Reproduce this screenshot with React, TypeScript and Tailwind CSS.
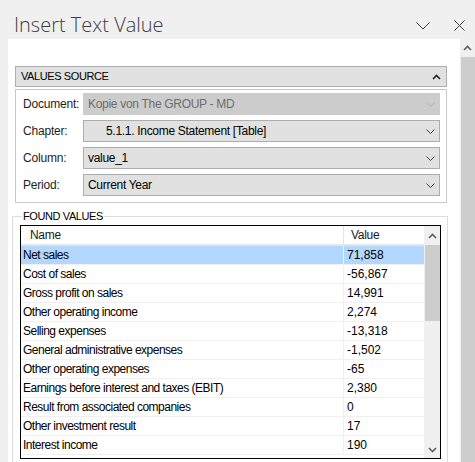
import React from "react";

const rows: [string, string][] = [
  ["Net sales", "71,858"],
  ["Cost of sales", "-56,867"],
  ["Gross profit on sales", "14,991"],
  ["Other operating income", "2,274"],
  ["Selling expenses", "-13,318"],
  ["General administrative expenses", "-1,502"],
  ["Other operating expenses", "-65"],
  ["Earnings before interest and taxes (EBIT)", "2,380"],
  ["Result from associated companies", "0"],
  ["Other investment result", "17"],
  ["Interest income", "190"],
];

function SmallChevron({ up = false, color = "#606060" }: { up?: boolean; color?: string }) {
  return (
    <svg width="9" height="6" viewBox="0 0 9 6" className="block">
      <path
        d={up ? "M1 5 L4.5 1.5 L8 5" : "M1 1 L4.5 4.5 L8 1"}
        fill="none"
        stroke={color}
        strokeWidth="1.6"
      />
    </svg>
  );
}

function Select({
  label,
  value,
  disabled = false,
  indent = false,
}: {
  label: string;
  value: string;
  disabled?: boolean;
  indent?: boolean;
}) {
  return (
    <div className="flex items-center h-[22px]">
      <div className="w-[67px] pl-[7px] text-[#1e1e1e] tracking-[-0.2px]">{label}</div>
      <div
        className={
          "flex-1 h-[22px] flex items-center border " +
          (disabled ? "bg-[#cccccc] border-[#cccccc] text-[#6d6d6d]" : "bg-[#e1e1e1] border-[#adadad] text-black")
        }
      >
        <div className={"flex-1 truncate tracking-[-0.3px] " + (indent ? "pl-[22px]" : "pl-[4px]")}>{value}</div>
        <div className="w-[18px] flex justify-center">
          <svg width="9" height="5" viewBox="0 0 9 5" className="block">
            <path d="M0.5 0.5 L4.5 4.5 L8.5 0.5" fill="none" stroke={disabled ? "#b0b0b0" : "#404040"} strokeWidth="1" />
          </svg>
        </div>
      </div>
    </div>
  );
}

export default function App() {
  return (
    <div
      className="w-[475px] h-[462px] bg-[#f0f0f0] overflow-hidden flex flex-col text-[12px] leading-[15px]"
      style={{ fontFamily: '"Liberation Sans", Arial, sans-serif' }}
    >
      {/* Title bar */}
      <div className="h-[39px] flex items-start shrink-0">
        <div
          className="pl-[14px] pt-[13px] text-[20px] leading-[24px] font-light text-[#3c3c3c]"
          style={{ fontFamily: '"Open Sans", "Noto Sans", sans-serif' }}
        >
          Insert Text Value
        </div>
        <div className="flex-1" />
        <div className="pt-[22px] pr-[24px]">
          <svg width="14" height="8" viewBox="0 0 14 8" className="block">
            <path d="M0.5 0.5 L7 7 L13.5 0.5" fill="none" stroke="#444" strokeWidth="1" />
          </svg>
        </div>
        <div className="pt-[20px] pr-[10px]">
          <svg width="11" height="11" viewBox="0 0 11 11" className="block">
            <path d="M0.5 0.5 L10.5 10.5 M10.5 0.5 L0.5 10.5" fill="none" stroke="#444" strokeWidth="1" />
          </svg>
        </div>
      </div>

      <div className="flex flex-1 min-h-0">
        <div className="w-[8px] shrink-0" />
        {/* White task pane content */}
        <div className="w-[452px] bg-white pt-[27px] pl-[7px] pr-[13px]">
          <div className="h-[21px] bg-[#e1e1e1] border border-[#adadad] flex items-center">
            <div className="pl-[5px] flex-1 text-black text-[11px] tracking-[-0.4px]">VALUES SOURCE</div>
            <div className="pr-[5px]">
              <SmallChevron up color="#222" />
            </div>
          </div>
          <div className="mt-[2px] h-[114px] border border-[#c8c8c8] pt-[3px] pr-[6px] flex flex-col gap-[5px]">
            <Select label="Document:" value="Kopie von The GROUP - MD" disabled />
            <Select label="Chapter:" value="5.1.1. Income Statement [Table]" indent />
            <Select label="Column:" value="value_1" />
            <Select label="Period:" value="Current Year" />
          </div>

          <fieldset className="mt-[6px] -ml-[3px] mr-[-1px] border border-[#dcdcdc] pl-[7px] pr-[6px] pb-0 h-[260px]">
            <legend className="ml-[2px] px-[1px] text-black leading-[14px] text-[11px] tracking-[-0.4px]">
              FOUND VALUES
            </legend>
            <div className="mt-[2px] border border-black flex h-[234px]">
              <div className="flex-1 flex flex-col">
                <div className="h-[20px] flex border-b-2 border-[#e5e5e5] shrink-0">
                  <div className="w-[322px] pl-[9px] flex items-center text-[#1a1a1a] tracking-[-0.3px]">Name</div>
                  <div className="flex-1 pl-[7px] flex items-center border-l border-[#e5e5e5] text-[#1a1a1a] tracking-[-0.3px]">
                    Value
                  </div>
                </div>
                {rows.map(([name, value], i) => (
                  <div
                    key={name}
                    className={
                      "h-[19px] flex shrink-0 border-b border-[#f0f0f0] " + (i === 0 ? "bg-[#b3d7ff]" : "")
                    }
                  >
                    <div className="w-[322px] pl-[2px] flex items-center text-black tracking-[-0.5px]">{name}</div>
                    <div className="flex-1 pl-[3px] flex items-center border-l border-[#f0f0f0] text-black">{value}</div>
                  </div>
                ))}
              </div>
              {/* List scrollbar */}
              <div className="w-[16px] bg-[#f0f0f0] flex flex-col items-center shrink-0">
                <div className="h-[19px] flex items-center justify-center">
                  <SmallChevron up />
                </div>
                <div className="w-[15px] h-[76px] bg-[#cdcdcd]" />
                <div className="flex-1" />
                <div className="h-[17px] flex items-center justify-center">
                  <SmallChevron />
                </div>
              </div>
            </div>
          </fieldset>
        </div>
        {/* Pane scrollbar */}
        <div className="w-[15px] flex flex-col items-center">
          <div className="h-[18px] flex items-center justify-center">
            <SmallChevron up />
          </div>
          <div className="w-[14px] flex-1 bg-[#cdcdcd] ml-[1px]" />
        </div>
      </div>
    </div>
  );
}
